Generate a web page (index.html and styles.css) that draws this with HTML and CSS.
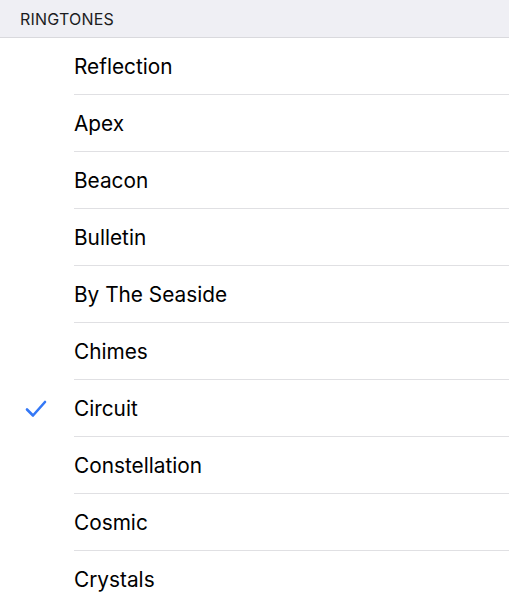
FILE: index.html
```html
<!DOCTYPE html>
<html>
<head>
<meta charset="utf-8">
<link rel="stylesheet" href="styles.css">
</head>
<body>
<div class="header">RINGTONES</div>
<ul class="list">
  <li class="row"><span class="check"></span><span class="label">Reflection</span></li>
  <li class="row"><span class="check"></span><span class="label">Apex</span></li>
  <li class="row"><span class="check"></span><span class="label">Beacon</span></li>
  <li class="row"><span class="check"></span><span class="label">Bulletin</span></li>
  <li class="row"><span class="check"></span><span class="label">By The Seaside</span></li>
  <li class="row"><span class="check"></span><span class="label">Chimes</span></li>
  <li class="row"><span class="check"><svg width="22" height="18" viewBox="0 0 22 18"><path d="M2 9.5 L8 15.5 L20 2" fill="none" stroke="#3478f6" stroke-width="2.6" stroke-linecap="round" stroke-linejoin="round"/></svg></span><span class="label">Circuit</span></li>
  <li class="row"><span class="check"></span><span class="label">Constellation</span></li>
  <li class="row"><span class="check"></span><span class="label">Cosmic</span></li>
  <li class="row"><span class="check"></span><span class="label">Crystals</span></li>
</ul>
</body>
</html>
```
FILE: styles.css
```css
html, body {
  margin: 0;
  padding: 0;
  background: #ffffff;
  font-family: Inter, "Liberation Sans", sans-serif;
  overflow: hidden;
}
.header {
  height: 38px;
  box-sizing: border-box;
  background: #efeff4;
  border-bottom: 1px solid #d9d9dd;
  padding-left: 20px;
  padding-top: 10px;
  font-size: 16px;
  letter-spacing: 0.2px;
  line-height: 19px;
  color: #1c1c1e;
}
.list {
  list-style: none;
  margin: 0;
  padding: 0;
}
.row {
  display: flex;
  align-items: center;
  height: 57px;
}
.check {
  width: 74px;
  flex: none;
  display: flex;
  justify-content: flex-start;
  padding-left: 25px;
  box-sizing: border-box;
}
.check svg { display: block; }
.label {
  flex: 1;
  height: 57px;
  display: flex;
  align-items: center;
  padding-top: 1px;
  font-size: 20.8px;
  color: #000;
  border-bottom: 1px solid #e0e0e3;
  box-sizing: border-box;
}
```
